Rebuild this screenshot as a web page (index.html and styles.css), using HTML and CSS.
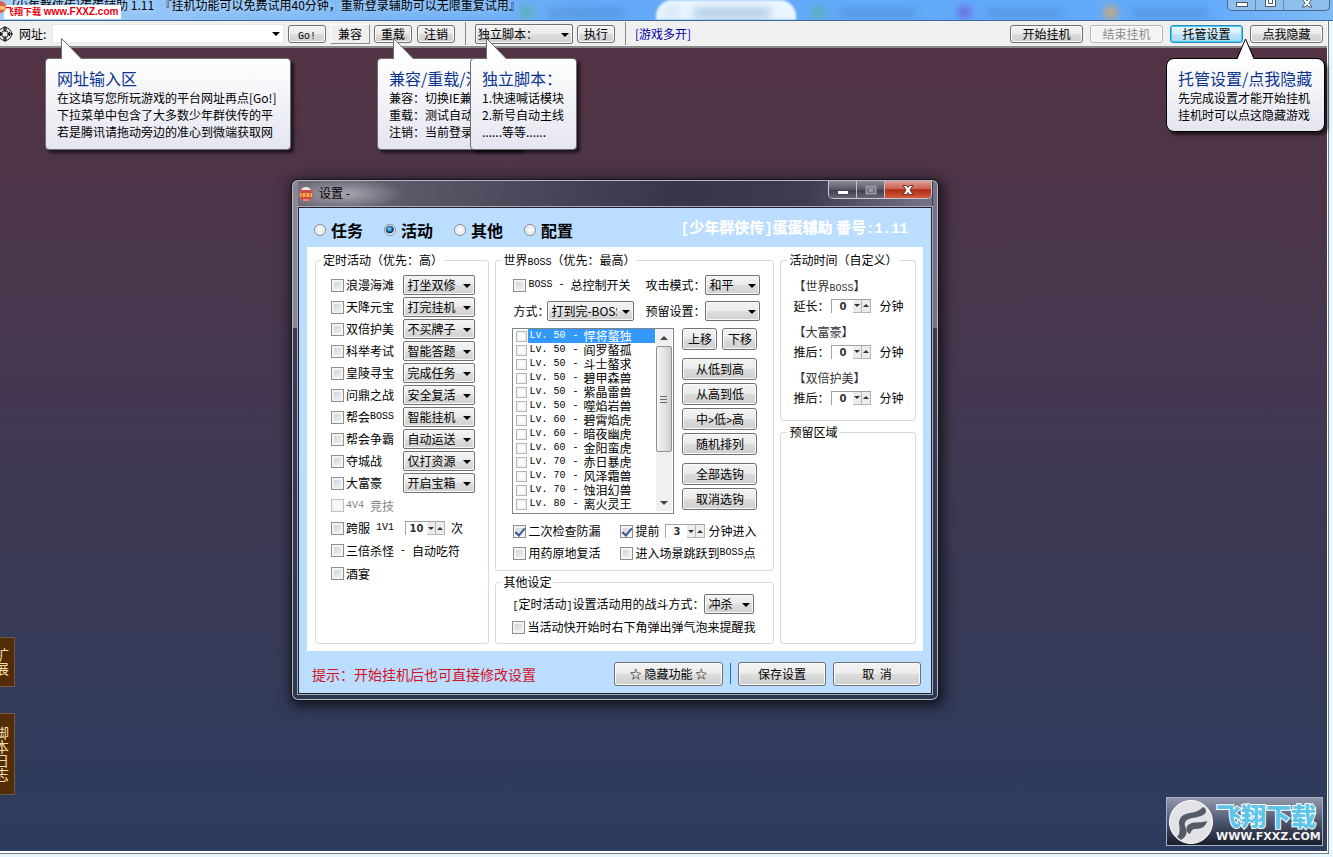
FILE: index.html
```html
<!DOCTYPE html>
<html lang="zh-CN">
<head>
<meta charset="utf-8">
<title>蛋蛋辅助 1.11</title>
<link rel="stylesheet" href="styles.css">
</head>
<body>
<header class="titlebar">
  <div class="ghost-tabs" aria-hidden="true"><i></i><i class="front"></i><i></i><i></i><i></i></div>
  <svg class="title-icon" viewBox="0 0 16 16"><circle cx="8" cy="8" r="7" fill="#d9604a"/><path d="M2 7h12v4H2z" fill="#f4c06a"/></svg>
  <h1>[少年群侠传]蛋蛋辅助 1.11 &nbsp;『挂机功能可以免费试用40分钟，重新登录辅助可以无限重复试用』</h1>
  <span class="stamp"><b>飞翔下载</b> www.FXXZ.com</span>
  <div class="outer-controls">
    <button aria-label="最小化"><svg viewBox="0 0 14 10"><rect x="1.500" y="2.500" width="11" height="4" fill="#fff" stroke="#46566b"/></svg></button>
    <button aria-label="最大化"><svg viewBox="0 0 14 10"><path d="M2.500 -1v7.500h10V-1M5.500 -1v4.500h4V-1" fill="#fff" stroke="#46566b"/></svg></button>
    <button class="wide" aria-label="关闭"><svg viewBox="0 0 14 10"><path d="M2 7l3-4-3-4h4l1 2 1-2h4L9 3l3 4H9L7 5 5 7z" fill="#fff" stroke="#46566b"/></svg></button>
  </div>
</header>

<div class="shell">
<nav class="toolbar">
  <svg class="aim" viewBox="0 0 16 16" fill="none" stroke="#111"><circle cx="7" cy="8" r="6.500"/><circle cx="7" cy="8" r="3.500"/><path d="M7 0v6M7 10v6M0 8h5M9 8h6M5 3h4M5 13h4M2.500 6v4M11.500 6v4"/></svg>
  <label class="addr-label" for="addr">网址:</label>
  <span class="addr"><input id="addr" type="text"><button class="drop" aria-label="展开"></button></span>
  <button class="btn small"><span class="mono">Go!</span></button>
  <button class="btn small flat">兼容</button>
  <button class="btn small">重载</button>
  <button class="btn small">注销</button>
  <i class="rule"></i>
  <span class="sel script"><select aria-label="独立脚本"><option>独立脚本：</option></select></span>
  <button class="btn small">执行</button>
  <i class="rule"></i>
  <a class="multi" href="#">[游戏多开]</a>
  <div class="run">
    <button class="btn">开始挂机</button>
    <button class="btn" disabled>结束挂机</button>
    <button class="btn glow">托管设置</button>
    <button class="btn">点我隐藏</button>
  </div>
</nav>

<main class="stage">
  <button class="side ext">扩展</button>
  <button class="side log">脚本日志</button>
  <div class="mark">
    <svg viewBox="0 0 46 46"><circle cx="23" cy="23" r="21.500" fill="#e3e3e6" stroke="#fff"/><path d="M9 38c3-3 3-8 2-13 0-7 4-10 11-11 7-1 10-3 13-6 4 2 4 6 0 8-5 3-10 2-14 4-5 2-5 6-3 9 2 5-1 10-5 12z" fill="#545a66"/><path d="M19 27c6-6 12-2 20-5-1 5-5 8-11 8-4 0-5 2-6 5-3-1-4-4-3-8z" fill="#545a66"/></svg>
    <p><strong>飞翔下载</strong><span>WWW.FXXZ.COM</span></p>
  </div>
</main>
</div>

<aside class="tip t1"><svg viewBox="0 0 22 22"><path d="M.5 22V.5L20.500 21.500V22z"/><path class="edge" d="M.5 21V.5L20.500 20.500"/></svg>
  <h2>网址输入区</h2><p>在这填写您所玩游戏的平台网址再点[Go!]</p><p>下拉菜单中包含了大多数少年群侠传的平</p><p>若是腾讯请拖动旁边的准心到微端获取网</p></aside>
<aside class="tip t2"><svg viewBox="0 0 22 22"><path d="M.5 22V.5L20.500 21.500V22z"/><path class="edge" d="M.5 21V.5L20.500 20.500"/></svg>
  <h2>兼容/重载/注销</h2><p>兼容：切换IE兼容</p><p>重载：测试自动</p><p>注销：当前登录</p></aside>
<aside class="tip t3"><svg viewBox="0 0 22 22"><path d="M.5 22V.5L20.500 21.500V22z"/><path class="edge" d="M.5 21V.5L20.500 20.500"/></svg>
  <h2>独立脚本：</h2><p>1.快速喊话模块</p><p>2.新号自动主线</p><p>......等等......</p></aside>
<aside class="tip t4"><svg viewBox="0 0 22 22"><path d="M1 22L9.500 1 18 22z"/><path class="edge" d="M1 20.500L9.500 1 18 20.500"/></svg>
  <h2>托管设置/点我隐藏</h2><p>先完成设置才能开始挂机</p><p>挂机时可以点这隐藏游戏</p></aside>

<section class="dialog" role="dialog" aria-labelledby="dlg">
  <header class="caption">
    <svg viewBox="0 0 14 16"><ellipse cx="7" cy="8.500" rx="6.500" ry="7" fill="#d5473f"/><path d="M2 4c2-4 8-4 10 0z" fill="#f5e6e6"/><path d="M1 7h12v4H1z" fill="#f7b64c"/><path d="M3 7v4M7 7v4M11 7v4" stroke="#c33"/><path d="M4 14h6" stroke="#f3c9c4"/></svg>
    <h2 id="dlg">设置 -</h2>
    <div class="controls">
      <button aria-label="最小化"><svg viewBox="0 0 14 12"><rect x="1.500" y="6.500" width="11" height="4" fill="#fff" stroke="#445"/></svg></button>
      <button aria-label="最大化"><svg viewBox="0 0 14 12"><path d="M2.500 2.500h9v7h-9zM5.500 5h3v2h-3z" fill="none" stroke="#9a98a6" stroke-width="2"/></svg></button>
      <button class="close" aria-label="关闭"><svg viewBox="0 0 14 12"><path d="M2 1.500h3.500L7 3.500l1.500-2H12L9 6l3 4.500H8.500L7 8.500l-1.500 2H2L5 6z" fill="#fff" stroke="#5c3333"/></svg></button>
    </div>
  </header>
  <div class="client">
    <div class="tabs">
      <label><input type="radio" name="tab">任务</label>
      <label><input type="radio" name="tab" checked>活动</label>
      <label><input type="radio" name="tab">其他</label>
      <label><input type="radio" name="tab">配置</label>
      <strong><span>[</span>少年群侠传<span>]</span>蛋蛋辅助 番号<span>:1.11</span></strong>
    </div>
    <div class="panel">
      <fieldset class="events">
        <legend>定时活动（优先：高）</legend>
        <div class="row"><label><input type="checkbox">浪漫海滩</label><span class="sel"><select aria-label="浪漫海滩"><option>打坐双修</option></select></span></div>
        <div class="row"><label><input type="checkbox">天降元宝</label><span class="sel"><select aria-label="天降元宝"><option>打完挂机</option></select></span></div>
        <div class="row"><label><input type="checkbox">双倍护美</label><span class="sel"><select aria-label="双倍护美"><option>不买牌子</option></select></span></div>
        <div class="row"><label><input type="checkbox">科举考试</label><span class="sel"><select aria-label="科举考试"><option>智能答题</option></select></span></div>
        <div class="row"><label><input type="checkbox">皇陵寻宝</label><span class="sel"><select aria-label="皇陵寻宝"><option>完成任务</option></select></span></div>
        <div class="row"><label><input type="checkbox">问鼎之战</label><span class="sel"><select aria-label="问鼎之战"><option>安全复活</option></select></span></div>
        <div class="row"><label><input type="checkbox">帮会<span class="mono">BOSS</span></label><span class="sel"><select aria-label="帮会BOSS"><option>智能挂机</option></select></span></div>
        <div class="row"><label><input type="checkbox">帮会争霸</label><span class="sel"><select aria-label="帮会争霸"><option>自动运送</option></select></span></div>
        <div class="row"><label><input type="checkbox">夺城战</label><span class="sel"><select aria-label="夺城战"><option>仅打资源</option></select></span></div>
        <div class="row"><label><input type="checkbox">大富豪</label><span class="sel"><select aria-label="大富豪"><option>开启宝箱</option></select></span></div>
        <div class="row tall"><label class="off"><input type="checkbox" disabled><span class="mono">4V4 </span>竞技</label></div>
        <div class="row"><label><input type="checkbox">跨服<span class="mono"> 1V1</span></label><span class="spin"><input type="text" value="10" aria-label="跨服次数"><button aria-label="减"></button><button class="up" aria-label="加"></button></span>次</div>
        <div class="row tall"><label><input type="checkbox">三倍杀怪<span class="mono"> - </span>自动吃符</label></div>
        <div class="row tall"><label><input type="checkbox">酒宴</label></div>
      </fieldset>

      <div class="middle">
        <fieldset class="boss">
          <legend>世界<span class="mono">BOSS</span>（优先：最高）</legend>
          <div class="grid">
            <label><input type="checkbox"><span class="mono">BOSS - </span>总控制开关</label>
            <label for="atk">攻击模式：</label><span class="sel"><select id="atk"><option>和平</option></select></span>
            <div class="pair"><label for="way">方式：</label><span class="sel way"><select id="way"><option>打到完-BOSS</option></select></span></div>
            <label for="rsv">预留设置：</label><span class="sel"><select id="rsv"><option></option></select></span>
          </div>
          <div class="order">
            <div class="list">
              <ul>
                <li class="on"><label><input type="checkbox"><span><b>Lv. 50</b><b>-</b>悍将螯独</span></label></li>
                <li><label><input type="checkbox"><span><b>Lv. 50</b><b>-</b>阎罗螯孤</span></label></li>
                <li><label><input type="checkbox"><span><b>Lv. 50</b><b>-</b>斗士螯求</span></label></li>
                <li><label><input type="checkbox"><span><b>Lv. 50</b><b>-</b>碧甲森兽</span></label></li>
                <li><label><input type="checkbox"><span><b>Lv. 50</b><b>-</b>紫晶雷兽</span></label></li>
                <li><label><input type="checkbox"><span><b>Lv. 50</b><b>-</b>噬焰岩兽</span></label></li>
                <li><label><input type="checkbox"><span><b>Lv. 60</b><b>-</b>碧霄焰虎</span></label></li>
                <li><label><input type="checkbox"><span><b>Lv. 60</b><b>-</b>暗夜幽虎</span></label></li>
                <li><label><input type="checkbox"><span><b>Lv. 60</b><b>-</b>金阳蛮虎</span></label></li>
                <li><label><input type="checkbox"><span><b>Lv. 70</b><b>-</b>赤日暴虎</span></label></li>
                <li><label><input type="checkbox"><span><b>Lv. 70</b><b>-</b>风泽霜兽</span></label></li>
                <li><label><input type="checkbox"><span><b>Lv. 70</b><b>-</b>蚀泪幻兽</span></label></li>
                <li><label><input type="checkbox"><span><b>Lv. 80</b><b>-</b>离火灵王</span></label></li>
              </ul>
              <div class="scroll"><i class="arrow up"></i><i class="thumb"><svg viewBox="0 0 8 9"><path d="M0 1.500h7M0 4.500h7M0 7.500h7" stroke="#6b6b6b"/></svg></i><i class="arrow"></i></div>
            </div>
            <div class="stack">
              <div class="two"><button class="btn">上移</button><button class="btn">下移</button></div>
              <div class="group"><button class="btn">从低到高</button><button class="btn">从高到低</button><button class="btn">中<span class="mono">&gt;</span>低<span class="mono">&gt;</span>高</button><button class="btn">随机排列</button></div>
              <div class="group"><button class="btn">全部选钩</button><button class="btn">取消选钩</button></div>
            </div>
          </div>
          <div class="checks">
            <label><input type="checkbox" checked>二次检查防漏</label>
            <div class="pair"><label><input type="checkbox" checked>提前</label><span class="spin"><input type="text" value="3" aria-label="提前分钟"><button aria-label="减"></button><button class="up" aria-label="加"></button></span>分钟进入</div>
            <label><input type="checkbox">用药原地复活</label>
            <label><input type="checkbox">进入场景跳跃到<span class="mono">BOSS</span>点</label>
          </div>
        </fieldset>
        <fieldset class="other">
          <legend>其他设定</legend>
          <div class="pair fight"><label for="fight"><span class="mono">[</span>定时活动<span class="mono">]</span>设置活动用的战斗方式：</label><span class="sel"><select id="fight"><option>冲杀</option></select></span></div>
          <label class="notify"><input type="checkbox">当活动快开始时右下角弹出弹气泡来提醒我</label>
        </fieldset>
      </div>

      <div class="right">
        <fieldset class="times">
          <legend>活动时间（自定义）</legend>
          <h3>【世界<span class="mono">BOSS</span>】</h3>
          <div class="pair"><label for="d1">延长：</label><span class="spin"><input id="d1" type="text" value="0"><button aria-label="减"></button><button class="up" aria-label="加"></button></span>分钟</div>
          <h3>【大富豪】</h3>
          <div class="pair"><label for="d2">推后：</label><span class="spin"><input id="d2" type="text" value="0"><button aria-label="减"></button><button class="up" aria-label="加"></button></span>分钟</div>
          <h3>【双倍护美】</h3>
          <div class="pair"><label for="d3">推后：</label><span class="spin"><input id="d3" type="text" value="0"><button aria-label="减"></button><button class="up" aria-label="加"></button></span>分钟</div>
        </fieldset>
        <fieldset class="spare"><legend>预留区域</legend></fieldset>
      </div>
    </div>
    <footer class="actions">
      <p>提示：开始挂机后也可直接修改设置</p>
      <button class="btn hide">☆ 隐藏功能 ☆</button><i></i>
      <button class="btn">保存设置</button>
      <button class="btn">取 &nbsp;消</button>
    </footer>
  </div>
</section>
</body>
</html>
```
FILE: styles.css
```css
* { box-sizing: border-box; }
body {
  margin: 0; height: 100vh; display: flex; flex-direction: column; overflow: hidden; position: relative;
  background: #eaf6fd; color: #000; font: 12px/16px "Noto Sans CJK SC", sans-serif;
}
h1, h2, h3, p, ul { margin: 0; padding: 0; font: inherit; list-style: none; }
button, input, select { font: inherit; color: inherit; margin: 0; padding: 0; }
.mono { font: 10px/12px "Liberation Mono", monospace; white-space: pre; }

/* outer window title */
.titlebar {
  flex: none; height: 21px; position: relative; overflow: hidden; display: flex; align-items: flex-start;
  border-bottom: 1px solid #3f6896;
  background: linear-gradient(90deg, #a3cdf7, #86bdf6 20%, #64aaf8 45%, #62aafb 90%, #7fbaf5);
}
.ghost-tabs { position: absolute; inset: 0 90px 0 510px; display: flex; gap: 6px; }
.ghost-tabs i { width: 140px; position: relative; }
.ghost-tabs i::before { content: ""; position: absolute; left: 38px; top: 9px; width: 76px; height: 8px; background: #3976b5; opacity: .4; filter: blur(4px); }
.ghost-tabs i::after { content: ""; position: absolute; left: 10px; top: 6px; width: 13px; height: 13px; border-radius: 50%; background: #5bb0a8; filter: blur(4px); }
.ghost-tabs i:nth-child(4)::after { background: #6c62dc; }
.ghost-tabs i:nth-child(5)::after { background: #e0a860; }
.ghost-tabs .front { background: #e9f5ff; border-radius: 16px 16px 0 0; filter: blur(1px); }
.ghost-tabs .front::after { background: #cfe3f3; }
.title-icon { flex: none; width: 14px; height: 14px; margin: 0 0 0 -7px; z-index: 1; }
.titlebar h1 { margin-left: 5px; margin-top: -4px; line-height: 18px; white-space: nowrap; position: relative; text-shadow: 0 0 6px #d5e9fd; }
.stamp { position: absolute; left: 4px; top: 5px; padding: 0 3px 0 1px; background: #fff; color: #e60012; font: bold 10px/14px "Liberation Sans", sans-serif; white-space: nowrap; }
.stamp b { font: bold 9px/14px "Noto Sans CJK SC", sans-serif; }
.outer-controls { position: absolute; right: 3px; top: 0; height: 11px; display: flex; border: 1px solid #49698c; border-top: 0; border-radius: 0 0 5px 5px; background: #8fbfec; overflow: hidden; }
.outer-controls button { width: 28px; border: 0; border-right: 1px solid #6389b0; background: none; display: flex; justify-content: center; align-items: flex-start; }
.outer-controls .wide { width: 45px; border: 0; }
.outer-controls svg { width: 14px; height: 10px; }

.shell { flex: 1; display: flex; flex-direction: column; margin: 0 4px 3px 0; border: solid #6f7f8b; border-width: 0 1px 1px 0; padding: 0 1px 2px 0; background: #fff; }
.toolbar { flex: none; height: 27px; display: flex; align-items: center; padding-right: 4px; background: #f0f0f0; border-bottom: 2px solid #8b8b8b; white-space: nowrap; }
.aim { width: 16px; height: 16px; margin-left: -2px; }
.addr-label { margin-left: 5px; width: 33px; }
.addr { width: 232px; height: 19px; display: flex; background: #fff; border: 1px solid #e3e9ef; }
.addr input { flex: 1; border: 0; min-width: 0; outline: 0; background: none; }
.drop { width: 15px; border: 0; background: none; display: grid; place-items: center; }
.drop::after, .sel::after { content: ""; border: 4px solid transparent; border-top-color: #000; border-bottom: 0; }
.btn {
  height: 22px; border: 1px solid #707070; border-radius: 3px; white-space: nowrap; line-height: 16px;
  background: linear-gradient(#f3f3f3, #ebebeb 48%, #dcdcdc 50%, #cfcfcf); box-shadow: inset 0 0 0 1px #fbfbfb;
}
.small { width: 38px; height: 18px; margin-left: 5px; }
.addr + .small { margin-left: 4px; }
.flat { width: 40px; height: 20px; margin-left: 4px; border: 1px solid; border-color: #fff #8d8d8d #8d8d8d #fff; border-radius: 0; background: #efefef; box-shadow: none; }
.flat + .small { margin-left: 4px; }
.rule { width: 1px; height: 23px; background: #8a8a8a; margin: 0 9px 0 10px; }
.sel { position: relative; display: inline-flex; height: 20px; }
.sel::after { position: absolute; right: 4px; top: 9px; pointer-events: none; }
.sel select { appearance: none; width: 100%; height: 100%; padding: 0 0 0 3px; border: 1px solid #707070; border-radius: 2px; background: linear-gradient(#f3f3f3, #ebebeb 48%, #dedede 50%, #d0d0d0); box-shadow: inset 0 0 0 1px #f8f8f8; }
.script { width: 98px; }
.script select { padding-left: 2px; }
.script + .small { margin-left: 4px; }
.multi { color: #0000a8; text-decoration: none; }
.run { margin-left: auto; display: flex; gap: 7px; }
.run .btn { width: 73px; height: 18px; }
.btn:disabled { color: #8c8c8c; background: #f4f4f4; border-color: #b4b8ba; }
.glow { border-color: #2b8bbd; background: linear-gradient(#eaf6fd, #d7edfa 48%, #bfe5f9 50%, #a6daf4); box-shadow: inset 0 0 0 1px #3fd0fb; }

.stage { flex: 1; position: relative; overflow: hidden; background: linear-gradient(#533344, #2c3c5e); }
.side {
  position: absolute; left: -1px; width: 16px; padding: 0 5px 0 0; border: 1px solid #6d5b4b; background: #532c06; color: #f6dfa4;
  font-size: 14px; line-height: 14px; display: flex; justify-content: center; align-items: flex-start; writing-mode: vertical-rl; overflow: hidden;
}
.ext { bottom: 164px; height: 50px; }
.log { bottom: 56px; height: 82px; }
.mark { position: absolute; right: 4px; bottom: 5px; width: 157px; height: 49px; display: flex; align-items: center; gap: 2px; padding-left: 1px; border: 1px solid #a9b0c0; background: linear-gradient(#9299ad, #4d566e 50%, #171c2b); }
.mark svg { flex: none; width: 46px; height: 46px; }
.mark p { display: flex; flex-direction: column; align-items: flex-start; }
.mark strong { font-size: 25px; line-height: 30px; font-weight: 900; color: #5ec4ea; -webkit-text-stroke: 2px #fff; paint-order: stroke; }
.mark p span { font: bold 11px/13px "DejaVu Sans", sans-serif; color: #f2f2f2; white-space: nowrap; }

/* hint balloons */
.tip { position: absolute; top: 58px; padding: 8px 11px 9px; border: 1px solid #6f6f76; border-radius: 4px; background: linear-gradient(#fff, #e4e5f0); box-shadow: 3px 3px 3px #0009; white-space: nowrap; line-height: 17px; }
.tip h2 { font-size: 16px; line-height: 22px; color: #0c3590; }
.tip svg { position: absolute; top: -21px; width: 22px; height: 22px; fill: #fff; }
.tip .edge { fill: none; stroke: #6f6f76; }
.t1 { left: 45px; width: 246px; } .t1 svg { left: 15px; }
.t2 { left: 377px; width: 145px; } .t2 svg { left: 15px; }
.t3 { left: 470px; width: 107px; } .t3 svg { left: 15px; }
.t4 { right: 8px; width: 159px; border-color: #000; border-radius: 8px; padding-left: 11px; padding-bottom: 8px; }
.t4 svg { left: 69px; } .t4 .edge { stroke: #000; }

/* settings window */
.dialog { position: absolute; left: 291px; top: 179px; width: 648px; padding: 1px 6px 6px; border: 1px solid #15151d; border-radius: 7px; box-shadow: inset 0 0 0 1px #b9b9c6, 2px 3px 12px 3px #0009; background: linear-gradient(90deg, #8a8794 0 6px, transparent 6px 641px, #77748a 641px) 0 0 / 100% 148px no-repeat, linear-gradient(#433d50, #2c3852); }
.caption { height: 26px; display: flex; align-items: center; background: radial-gradient(ellipse 60px 16px at 46px 13px, #aaa6b1, transparent), linear-gradient(100deg, #6b6877, #4c485b 35%, #39344a 60%, #3f3a50 80%, #77748a); }
.caption > svg { width: 14px; height: 16px; margin-left: 1px; }
.caption h2 { margin-left: 6px; line-height: 20px; padding-bottom: 3px; }
.controls { margin-left: auto; align-self: flex-start; display: flex; height: 18px; border: 1px solid #c9c9d2; border-top: 0; border-radius: 0 0 5px 5px; overflow: hidden; }
.controls button { width: 28px; border: 0; border-right: 1px solid #c0c0cb; background: linear-gradient(#8e8b99, #595566 50%, #3f3b4d 51%, #686476); display: grid; place-items: center; }
.controls svg { width: 14px; height: 12px; }
.controls .close { width: 46px; border: 0; background: linear-gradient(#dfa197, #c95b48 48%, #b02a12 51%, #d45a3c); }
.client { border: 1px solid #20242f; outline: 1px solid #a7abba; background: #bbddff; padding: 0 8px; }
.tabs { height: 39px; padding: 5px 15px 0 7px; display: flex; align-items: center; gap: 18px; font-size: 16px; font-weight: bold; }
.tabs label { display: flex; align-items: center; gap: 5px; width: 52px; white-space: nowrap; }
.tabs input { appearance: none; flex: none; width: 12px; height: 12px; border: 1px solid #8a9097; border-radius: 50%; background: radial-gradient(#fff, #d4d8dc); box-shadow: inset 0 0 0 1px #f4f4f4; }
.tabs input:checked { background: radial-gradient(circle at 45% 40%, #5cc8f0 0 1px, #14507e 3px, #123a5c 4px, #eef3f6 5px); }
.tabs strong { margin-left: auto; color: #fff; font-size: 15px; line-height: 20px; padding-bottom: 5px; white-space: nowrap; }
.tabs strong span { font-family: "Liberation Mono", monospace; font-size: 14px; }
.panel { background: #fff; padding: 5px 7px 7px 8px; display: grid; grid-template-columns: 175fr 280fr 136fr; gap: 6px; }
fieldset { margin: 0; padding: 0; border: 1px solid #d3dde3; border-radius: 3px; min-width: 0; }
legend { margin-left: 6px; padding: 0 2px; line-height: 16px; white-space: nowrap; }
label { white-space: nowrap; }
input[type=checkbox] { appearance: none; flex: none; width: 13px; height: 13px; margin: 0 2px 0 0; border: 1px solid #8e8f8f; background: linear-gradient(135deg, #c9ced3, #f6f6f6); box-shadow: inset 0 0 0 2px #f4f4f4; display: inline-grid; place-items: center; }
input[type=checkbox]:checked::after { content: ""; width: 4px; height: 8px; border: solid #3d5898; border-width: 0 2px 2px 0; transform: rotate(40deg); }
input[type=checkbox]:disabled { border-color: #c0c0c0; background: #fafafa; }
label:has(> input) { display: flex; align-items: center; }
.off { color: #838383; }
.events { padding: 6px 13px 0 15px; }
.events legend { margin-left: -10px; }
.row { height: 22px; display: flex; align-items: center; }
.row.tall { height: 23px; }
.row .sel { margin-left: auto; width: 72px; }
.spin { display: inline-flex; height: 14px; margin: 0 3px 0 6px; border: solid #a3a3a3; border-width: 1px 0 0 1px; }
.row .spin { margin: 0 6px 0 11px; }
.spin input { width: 21px; height: 13px; border: 0; outline: 0; text-align: center; color: #333; background: none; font: bold 10px/12px "DejaVu Sans", sans-serif; }
.spin button { width: 9px; height: 13px; border: solid #b5b5b5; border-width: 0 1px 1px 0; background: #ececec; display: grid; place-items: center; }
.spin button::after { content: ""; border: 3px solid transparent; border-top: 3px solid #333; border-bottom: 0; }
.spin .up::after { border: 3px solid transparent; border-bottom: 3px solid #333; border-top: 0; }
.middle { display: grid; gap: 3px; align-content: space-between; }
.boss { padding: 6px 13px 6px 17px; }
.boss legend { margin-left: -12px; }
.grid { display: grid; grid-template-columns: 132px 60px 55px; row-gap: 6px; align-items: center; }
.pair { display: flex; align-items: center; white-space: nowrap; }
.way { width: 87px; margin-left: -2px; }
.way select { padding-right: 16px; text-overflow: clip; }
.order { margin: 7px 3px 0 -1px; display: flex; gap: 8px; }
.list { flex: 1; display: flex; border: 1px solid #7f838a; padding: 0 1px 2px 2px; }
.list ul { flex: 1; }
.list li { height: 14px; line-height: 14px; }
.list label { height: 14px; }
.list input[type=checkbox] { width: 11px; height: 11px; border-color: #b5b5b5; background: #fff; margin: 0 1px 0 1px; }
.list label > span { flex: 1; height: 14px; padding-left: 1px; display: flex; align-items: center; }
.list b { font: 10px/14px "Liberation Mono", monospace; width: 43px; }
.list b + b { width: 11px; }
.on label > span { background: #39f; color: #fff; }
.scroll { width: 16px; margin-left: 1px; display: flex; flex-direction: column; background: #f0f0f0; }
.thumb { height: 106px; border: 1px solid #8f8f8f; border-radius: 2px; background: linear-gradient(90deg, #f5f5f5, #e3e3e3 50%, #cfcfcf); display: grid; place-items: center; }
.thumb svg { width: 8px; height: 9px; }
.arrow { height: 17px; display: grid; place-items: center; margin-top: auto; }
.arrow.up { margin: 0; }
.arrow::after { content: ""; border: 4px solid transparent; border-top-color: #444; border-bottom: 0; }
.arrow.up::after { border: 4px solid transparent; border-bottom-color: #444; border-top: 0; }
.stack { width: 75px; display: flex; flex-direction: column; gap: 8px; }
.group { display: grid; gap: 3px; }
.two { display: grid; grid-template-columns: 1fr 1fr; gap: 5px; }
.checks { margin-top: 6px; display: grid; grid-template-columns: 107px 1fr; grid-auto-rows: 22px; align-items: center; }
.other { padding: 4px 0 3px 16px; }
.other legend { margin-left: -11px; }
.fight label { width: 192px; }
.fight .sel { width: 50px; }
.notify { height: 26px; }
.right { display: flex; flex-direction: column; gap: 3px; }
.times { padding: 9px 0 12px 12px; }
.times legend { margin-left: -6px; }
.times h3 { color: #333; line-height: 18px; }
.times h3 ~ h3 { margin-top: 7px; }
.times .pair { height: 21px; }
.times .spin { margin: 0 8px 0 2px; }
.spare { flex: 1; }
.actions { height: 42px; display: flex; align-items: center; gap: 7px; padding: 3px 2px 0 5px; }
.actions p { margin-right: auto; font-size: 14px; line-height: 20px; color: #d4121e; }
.actions .btn { width: 88px; height: 24px; }
.actions .hide { width: 109px; }
.actions i { width: 1px; height: 21px; background: #1a6fd0; }
```
